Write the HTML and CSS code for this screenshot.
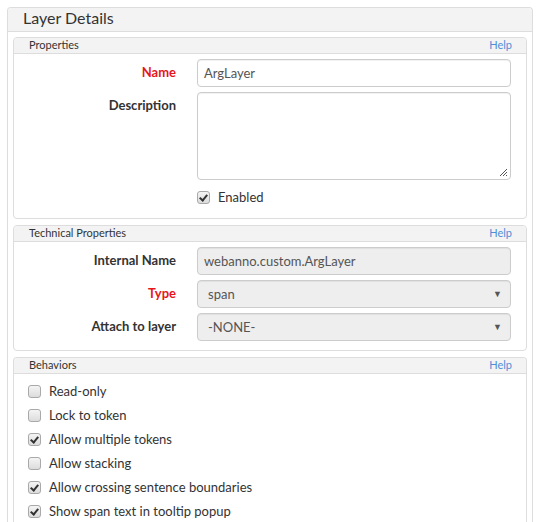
FILE: index.html
```html
<!DOCTYPE html>
<html>
<head>
<meta charset="utf-8">
<link rel="stylesheet" href="styles.css">
</head>
<body>
<div class="outer">
  <div class="outer-head">Layer Details</div>
  <div class="outer-body">
    <div class="panel">
      <div class="panel-head"><span>Properties</span><a class="help">Help</a></div>
      <div class="form">
        <label class="lbl req">Name</label>
        <div class="ctl"><div class="input">ArgLayer</div></div>
        <label class="lbl">Description</label>
        <div class="ctl"><div class="textarea"><svg class="grip" width="9" height="9" viewBox="0 0 9 9"><path d="M8 1 L1 8 M8 4 L4 8 M8 7 L7 8" stroke="#555" stroke-width="1"/></svg></div></div>
        <div></div>
        <div class="ctl check-row"><span class="cb on"></span><span>Enabled</span></div>
      </div>
    </div>
    <div class="panel">
      <div class="panel-head"><span>Technical Properties</span><a class="help">Help</a></div>
      <div class="form tech">
        <label class="lbl">Internal Name</label>
        <div class="ctl"><div class="input disabled">webanno.custom.ArgLayer</div></div>
        <label class="lbl req">Type</label>
        <div class="ctl"><div class="input select">span<span class="arrow">&#9660;</span></div></div>
        <label class="lbl">Attach to layer</label>
        <div class="ctl"><div class="input select">-NONE-<span class="arrow">&#9660;</span></div></div>
      </div>
    </div>
    <div class="panel last">
      <div class="panel-head"><span>Behaviors</span><a class="help">Help</a></div>
      <div class="checks">
        <div class="check-item"><span class="cb"></span><span>Read-only</span></div>
        <div class="check-item"><span class="cb"></span><span>Lock to token</span></div>
        <div class="check-item"><span class="cb on"></span><span>Allow multiple tokens</span></div>
        <div class="check-item"><span class="cb"></span><span>Allow stacking</span></div>
        <div class="check-item"><span class="cb on"></span><span>Allow crossing sentence boundaries</span></div>
        <div class="check-item"><span class="cb on"></span><span>Show span text in tooltip popup</span></div>
      </div>
    </div>
  </div>
</div>
</body>
</html>
```
FILE: styles.css
```css
html, body {
  margin: 0;
  padding: 0;
  height: 100%;
  background: #fff;
  font-family: Lato, "Open Sans", sans-serif;
  color: #333;
  overflow: hidden;
}
.outer {
  box-sizing: border-box;
  margin: 7px 0 0 7px;
  width: 526px;
  height: calc(100% - 7px);
  border: 1px solid #ddd;
  border-bottom: none;
  border-radius: 4px 4px 0 0;
  display: flex;
  flex-direction: column;
}
.outer-head {
  flex: none;
  height: 23px;
  line-height: 20px;
  background: #f3f3f3;
  border-bottom: 1px solid #ddd;
  border-radius: 4px 4px 0 0;
  padding-left: 15px;
  font-size: 16px;
  color: #333;
}
.outer-body {
  flex: 1;
  min-height: 0;
  padding: 5px 5px 0 5px;
  display: flex;
  flex-direction: column;
  gap: 6px;
}
.panel {
  flex: none;
  border: 1px solid #ddd;
  border-radius: 4px;
}
.panel.last {
  flex: 1 0 auto;
  border-bottom: none;
  border-radius: 4px 4px 0 0;
}
.panel-head {
  height: 15px;
  line-height: 13px;
  background: #f3f3f3;
  border-bottom: 1px solid #ddd;
  border-radius: 4px 4px 0 0;
  display: flex;
  justify-content: space-between;
  padding: 0 14px 0 15px;
  font-size: 11px;
  color: #333;
}
.help {
  color: #4d8fd6;
  font-size: 11px;
}
.form {
  display: grid;
  grid-template-columns: 162px 1fr;
  column-gap: 21px;
  row-gap: 5px;
  padding: 5px 15px 9px 0;
}
.lbl {
  text-align: right;
  font-weight: bold;
  font-size: 13px;
  line-height: 16px;
  padding-top: 5px;
  color: #333;
}
.lbl.req { color: #e8161b; }
.input {
  height: 26px;
  line-height: 26px;
  border: 1px solid #ccc;
  border-radius: 4px;
  padding: 0 6px;
  font-size: 13px;
  color: #555;
  background: #fff;
  box-shadow: inset 0 1px 1px rgba(0,0,0,0.06);
}
.input.disabled {
  background: #eee;
  color: #555;
}
.input.select {
  background: #eee;
  padding-left: 10px;
  display: flex;
  justify-content: space-between;
}
.arrow {
  font-size: 9px;
  color: #555;
  padding-right: 2px;
}
.textarea {
  position: relative;
  height: 86px;
  border: 1px solid #ccc;
  border-radius: 4px;
  background: #fff;
  box-shadow: inset 0 1px 1px rgba(0,0,0,0.06);
}
.grip {
  position: absolute;
  right: 2px;
  bottom: 2px;
}
.check-row {
  display: flex;
  align-items: center;
  gap: 8px;
  height: 24px;
  font-size: 13px;
}
.cb {
  position: relative;
  display: inline-block;
  width: 11px;
  height: 11px;
  border: 1px solid #a9a9a9;
  border-radius: 3px;
  background: linear-gradient(#f4f4f4, #dcdcdc);
  flex: none;
}
.cb.on::after {
  content: "";
  position: absolute;
  left: 3px;
  top: 1px;
  width: 3px;
  height: 6px;
  border: solid #333;
  border-width: 0 2px 2px 0;
  transform: rotate(40deg);
}
.checks {
  padding: 5px 14px 0 14px;
}
.check-item {
  display: flex;
  align-items: center;
  gap: 8px;
  height: 24px;
  font-size: 13px;
  color: #333;
}
```
